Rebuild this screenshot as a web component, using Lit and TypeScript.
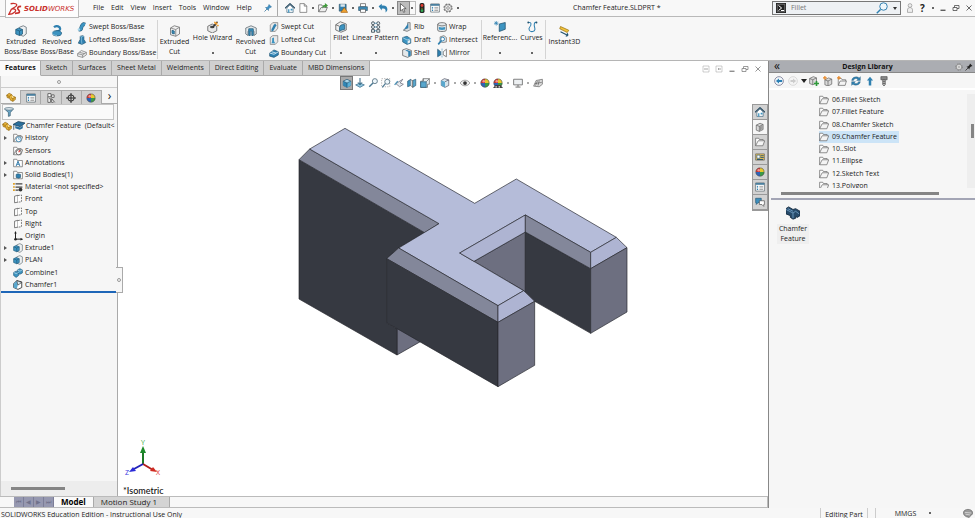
import { LitElement, html, svg, css, nothing } from "lit";
import { customElement, property, state } from "lit/decorators.js";
import { classMap } from "lit/directives/class-map.js";

/* Icon artwork on a 16 x 16 grid. */
const folder = svg`<path d="M1 14V2h5l1 2h6v2" fill="#fff" stroke="#555"/><path d="M1 14L5 6h10.500l-3 8z" fill="#f4f4f4" stroke="#555"/>`;
const cube = svg`<path d="M2 5l6-3 6 3v7l-6 3-6-3z" fill="#a9d6ea" stroke="#1f4f6b"/><path d="M2 5l6 3v7l-6-3z" fill="#2f86b5"/><path d="M8 8l6-3v7l-6 3z" fill="#5bb0d6"/><path d="M2 5l6 3 6-3M8 8v7" fill="none" stroke="#1f4f6b"/>`;
const ball = svg`<circle cx="8" cy="8" r="7" fill="#fff"/><path d="M8 8V1a7 7 0 0 1 7 7z" fill="#e8c82c"/><path d="M8 8V1a7 7 0 0 0-7 7z" fill="#d8342e"/><path d="M8 8h7a7 7 0 0 1-7 7z" fill="#3a9a48"/><path d="M8 8v7a7 7 0 0 1-7-7z" fill="#2d63b8"/><circle cx="8" cy="8" r="6.500" fill="none" stroke="#555"/><circle cx="6" cy="5" r="2" fill="#fff" opacity=".5"/>`;
const gear = svg`<circle cx="8" cy="8" r="6.300" fill="none" stroke="#777" stroke-width="2" stroke-dasharray="3 1.950"/><circle cx="8" cy="8" r="5.300" fill="#f2f2f2" stroke="#666"/><circle cx="8" cy="8" r="2.200" fill="none" stroke="#666"/>`;
const listIcon = svg`<path d="M1 1.500h14v13H1z" fill="#fff" stroke="#4b5961"/><path d="M1 1.500h14v3H1z" fill="#4a7f9e"/><path d="M3 7h2M3 9.500h2M3 12h2" stroke="#2f80b0" stroke-width="1.600"/><path d="M7 7h6M7 9.500h6M7 12h6" stroke="#777"/>`;
const partIcon = svg`<path d="M1 5l4-3 4 2 2 3 4 1v4l-4 3-4-2-1-3-4-1z" fill="#e9b53a" stroke="#8d6410"/><path d="M1 5l4 2 4-3M5 7v3M8 9l4 2 3-3M11 11v4" fill="none" stroke="#8d6410"/><circle cx="10.500" cy="8" r="1.300" fill="#fff3c4"/>`;
const extr = svg`<path d="M6 3l5-2 4 2v9l-4 3-5-2z" fill="#eceff1" stroke="#5a666e"/><path d="M1 6l4-2 5 2v6l-4 2-5-2z" fill="#3d94c1" stroke="#1f5878"/><path d="M1 6l5 2 4-2M6 8v6" fill="none" stroke="#1f5878"/>`;
const cut = svg`<path d="M2 4l5-3 7 2v9l-5 3-7-2z" fill="#f1f1f1" stroke="#666"/><path d="M2 4l7 2 5-3M9 6v9" fill="none" stroke="#777"/><path d="M4 7l3 1v4l-3-1z" fill="#3d94c1" stroke="#1f5878"/>`;
const planeIcon = svg`<path d="M2.500 3.500L8 2v11l-5.500 1z" fill="#fff" stroke="#555" stroke-width="1.200"/><path d="M8 2.500l5.500-1v11L8 13" fill="#fff" stroke="#555" stroke-width="1.200" stroke-dasharray="3 1.500"/>`;
const home = svg`<path d="M3 8v7h10V8L8 3z" fill="#fff" stroke="#2c5570"/><path d="M0 8.500L8 1l8 7.500" fill="none" stroke="#23475e" stroke-width="1.800"/><path d="M5 10h2v5H5zM9 9h3v3H9z" fill="#3d94c1"/>`;
const loft = svg`<path d="M5 2l4-1 2 1v5l3 5-6 3-6-2 3-6z" fill="#2f80b0" stroke="#22526e"/><path d="M5 2l2 1 4-1M7 3v5l1 7" fill="none" stroke="#9fd0e8"/>`;
const sheet = svg`<path d="M1 9l6-5 8 3v4l-6 4-8-2z" fill="#eee" stroke="#666"/><path d="M1 9l8 2 6-4M9 11v4M4 7l8 2" fill="none" stroke="#666"/>`;
const win = svg`<path d="M2 2h12v12H2z" fill="none" stroke="#777"/>`;

const icons: Record<string, unknown> = {
  folder, cube, ball, gear, list: listIcon, part: partIcon, extr, cut, plane: planeIcon, home, loft, sheet,
  ds: svg`<path d="M3 2c4-1 9 0 6 3-1 1-3 2-5 3M4 8c5-1 6 2 3 4-2 2-4 2-6 2l3-6" fill="none" stroke="#c9302c" stroke-width="1.500"/><path d="M15 5c-4 0-5 2-3 4s2 4-4 4" fill="none" stroke="#c9302c" stroke-width="1.800"/>`,
  pin: svg`<path d="M10 1l5 5-3 1-3 3v3L3 7h3l3-3z" fill="#3d8fc4" stroke="#276a96"/><path d="M6 10l-5 5" stroke="#276a96" stroke-width="1.500"/>`,
  pinDark: svg`<path d="M10 1l5 5-3 1-3 3v3L3 7h3l3-3z" fill="#222"/><path d="M6 10l-5 5" stroke="#222" stroke-width="1.500"/>`,
  doc: svg`<path d="M3 1h7l4 4v10H3z" fill="#fff" stroke="#555"/><path d="M10 1v4h4" fill="none" stroke="#555"/>`,
  open: svg`<path d="M1 14V3h5l1 2h6v3" fill="#fff" stroke="#444"/><path d="M1 14l4-7h10l-3 7z" fill="#eee" stroke="#444"/><path d="M7 9c0-5 2-6 4-6V0l5 4-5 4V6c-2 0-3 1-4 3z" fill="#3f9b3a"/>`,
  save: svg`<path d="M2 2h11v11H2z" fill="#2f80b0" stroke="#2b4d62"/><path d="M4 2h7v4H4z" fill="#d9e6ee"/><path d="M10 7l5.500 8h-11z" fill="#f0a331" stroke="#9d5d10"/>`,
  print: svg`<path d="M4 1h8v5H4z" fill="#fff" stroke="#444"/><path d="M1 6h14v6H1z" fill="#3d8fbd" stroke="#2b4d62"/><path d="M4 10h8v5H4z" fill="#fff" stroke="#444"/>`,
  undo: svg`<path d="M1 5l5-4v3c6-1 9 2 9 6 0 2-1 4-3 5 1-5-1-7-6-6v3z" fill="#2f80b0"/>`,
  cursor: svg`<path d="M4 1v12l3-3 2 5 2-1-2-5h4z" fill="#fff" stroke="#333"/>`,
  traffic: svg`<rect x="4" y="0" width="8" height="16" rx="3" fill="#222"/><circle cx="8" cy="4" r="2.300" fill="#e03c31"/><circle cx="8" cy="8.500" r="1.500" fill="#665c22"/><circle cx="8" cy="12.300" r="2.200" fill="#34a853"/>`,
  prompt: svg`<rect width="16" height="16" fill="#222"/><path d="M2 2h12v12H2z" fill="none" stroke="#999"/><path d="M4 4l5 4-5 4M8 12h5" stroke="#fff" stroke-width="1.600" fill="none"/>`,
  search: svg`<circle cx="10" cy="6" r="5" fill="#eef7fc" stroke="#2f80b0" stroke-width="1.300"/><path d="M6 10l-5 5" stroke="#2f80b0" stroke-width="2"/>`,
  user: svg`<circle cx="8" cy="4" r="3" fill="#eee" stroke="#888"/><path d="M4 15V11c0-5 8-5 8 0v4z" fill="#eee" stroke="#888"/>`,
  min: svg`<path d="M3 12.500h10" stroke="#444" stroke-width="2.400"/>`,
  restore: svg`<path d="M2 7h8v6H2zM5 7V3h9v6h-4" fill="none" stroke="#444" stroke-width="1.500"/>`,
  close: svg`<path d="M3 3l10 10M13 3L3 13" stroke="#444" stroke-width="1.600"/>`,
  dockL: svg`${win}<path d="M6 6v4M11 6L9 8l2 2" fill="none" stroke="#555" stroke-width="1.500"/>`,
  dockR: svg`${win}<path d="M10 6v4M6 6l2 2-2 2" fill="none" stroke="#555" stroke-width="1.500"/>`,
  revolve: svg`<path d="M4 3c3-3 9-1 8 3-1 3-5 2-6 4" fill="none" stroke="#2f80b0" stroke-width="3"/><ellipse cx="8" cy="11" rx="6" ry="3.500" fill="#3d94c1" stroke="#1f5878"/><path d="M3 8c-3 3 0 6 5 6" fill="none" stroke="#9fd0e8"/>`,
  sweep: svg`<path d="M3 12c5 1 3-3 5-6s2-3 5-2" fill="none" stroke="#22526e" stroke-width="6"/><path d="M3 12c5 1 3-3 5-6s2-3 5-2" fill="none" stroke="#3d94c1" stroke-width="4.500"/><circle cx="3" cy="12" r="2" fill="#a9d6ea"/>`,
  hole: svg`<path d="M1 7l6-3 6 3v6l-6 3-6-3z" fill="#e8e8e8" stroke="#555"/><ellipse cx="7" cy="8" rx="3" ry="1.800" fill="#444"/><path d="M8 8l6-7" stroke="#333" stroke-width="2"/><path d="M10 1l1 2 2 0-1 2" fill="none" stroke="#f09a28" stroke-width="1.800"/><path d="M14 5l1 2" stroke="#f09a28" stroke-width="2"/>`,
  revcut: svg`<path d="M1 4l7-3 7 3v8l-3 2V9c0-3-8-3-8 0v5l-3-2z" fill="#e4e8ea" stroke="#5a666e"/><path d="M5 5h6v9H9V8H7v6H5z" fill="#3d94c1" stroke="#1f5878"/>`,
  sweepcut: svg`<path d="M2 5l4-4h8v9l-4 5H2z" fill="#e8e8e8" stroke="#666"/><path d="M4 13c4 0 2-5 7-9" fill="none" stroke="#2f80b0" stroke-width="4"/>`,
  loftcut: svg`<path d="M2 4l4-3h8v10l-4 4H2z" fill="#e8e8e8" stroke="#666"/><path d="M5 5l3-1v6l2 3H4l1-3z" fill="#3d94c1"/>`,
  boundcut: svg`<path d="M1 8l7-5 7 3v5l-7 4-7-2z" fill="#2f80b0" stroke="#22526e"/><path d="M1 8l7 2 7-4M4 6l7 2" fill="none" stroke="#d6ecf6" stroke-width="1.400"/>`,
  fillet: svg`<path d="M1 5l6-4 8 3v8l-7 3-7-3z" fill="#eee" stroke="#555"/><path d="M6 13V9c0-3 3-5 7-4v6z" fill="#3d94c1" stroke="#1f5878"/><path d="M1 5l5 2" stroke="#555"/>`,
  pattern: svg`<g fill="#e8eef1" stroke="#46545c" stroke-width="1.200"><circle cx="4" cy="3" r="2"/><circle cx="11" cy="3" r="2"/><circle cx="4" cy="8" r="2"/><circle cx="11" cy="8" r="2"/><path d="M2 11.500h4v3.500H2zM9 11.500h4v3.500H9z"/></g><path d="M6 3h3M6 8h3M6 13h3" stroke="#2f80b0"/>`,
  rib: svg`<path d="M2 13l7-4V1h4v9l1 2-6 3z" fill="#d7dde0" stroke="#555"/><path d="M3 12l7-10v8z" fill="#2f80b0"/>`,
  draft: svg`<path d="M1 4l7-2 6 4v7l-6 2-7-4z" fill="#3d94c1" stroke="#22526e"/><path d="M1 4l7 4 6-2" fill="none" stroke="#d6ecf6"/><path d="M9 9l4-1v4l-4 2z" fill="#e8eef1"/>`,
  shell: svg`<path d="M1 3l6-2 8 3v8l-6 3-8-3z" fill="#e4e8ea" stroke="#444"/><path d="M5 4l5 2v8l4-2V5l-6-2z" fill="#2f80b0"/>`,
  wrap: svg`<path d="M1 4c0-4 14-4 14 0v9c0 3-14 3-14 0z" fill="#e4e8ea" stroke="#444"/><path d="M1 4c3 3 11 3 14 0" fill="none" stroke="#444"/><path d="M3 8c3 1 7 1 10 0v4c-3 1-7 1-10 0z" fill="#3d94c1"/>`,
  intersect: svg`<path d="M5 3l6-2 4 3v7l-5 1-5-1z" fill="#e4e8ea" stroke="#555"/><circle cx="9" cy="6.500" r="3" fill="#fff" stroke="#2f80b0" stroke-width="1.500"/><path d="M7 9l-5 6" stroke="#2f80b0" stroke-width="2.500"/>`,
  mirror: svg`<path d="M1 2l5 4v5l-5 3z" fill="#2f80b0" stroke="#22526e"/><path d="M15 2l-5 4v5l5 3z" fill="#fff" stroke="#444"/><path d="M8 1v14" stroke="#2f80b0" stroke-dasharray="2 1"/>`,
  ref: svg`<path d="M7 4l8-2v9l-8 3z" fill="#3d94c1" stroke="#22526e"/><path d="M3 0v6M0 3h6M1 1l4 4M5 1L1 5" stroke="#2f80b0"/>`,
  curves: svg`<path d="M3 2c5-1 4 4 2 6s-1 7 4 6 2-6 2-8 0-5 3-4" fill="none" stroke="#2f80b0" stroke-width="1.400"/><circle cx="3" cy="2" r="1.200" fill="#22526e"/><circle cx="14" cy="2" r="1.200" fill="#22526e"/>`,
  instant: svg`<path d="M2 2l11 5-2 3L1 5z" fill="#f2c33c" stroke="#9c7412"/><path d="M2 9l10 5M12 14l-1-3M12 14l-3 1" fill="none" stroke="#22526e" stroke-width="1.500"/>`,
  config: svg`<path d="M3 1h5v5H3zM3 6v9h4V9H5" fill="#fff" stroke="#444" stroke-width="1.200"/><path d="M9 3h4v4H9zM9 9l5 6M9 9v6h3" fill="#fff" stroke="#444" stroke-width="1.200"/>`,
  target: svg`<circle cx="8" cy="8" r="5" fill="none" stroke="#222" stroke-width="1.500"/><path d="M8 0v16M0 8h16" stroke="#222" stroke-width="1.500"/>`,
  funnel: svg`<path d="M1 3h14l-5 6v5l-3 1V9z" fill="#6da9c9" stroke="#2b4d62"/><ellipse cx="8" cy="3" rx="7" ry="2" fill="#e8f2f7" stroke="#2b4d62"/>`,
  cap: svg`<path d="M0 6l7-4 9 2-6 5z" fill="#2a6f9c" stroke="#173f5a"/><path d="M3 8l7 2 3-3v4l-4 2-6-2z" fill="#2a6f9c"/><path d="M1 7v6" stroke="#173f5a"/>`,
  history: svg`${folder}<circle cx="9" cy="10" r="4" fill="#fff" stroke="#2f80b0" stroke-width="1.300"/><path d="M9 7v3h2" fill="none" stroke="#2f80b0"/>`,
  sensors: svg`${folder}<circle cx="9" cy="10" r="4" fill="#fff" stroke="#555" stroke-width="1.300"/><path d="M9 10l2-3" stroke="#d8342e" stroke-width="1.800"/>`,
  annot: svg`<path d="M1 14V2h5l1 2h8v10z" fill="#fff" stroke="#555"/><path d="M5 13l3-8 3 8M6 10h4" fill="none" stroke="#2471a3" stroke-width="1.400"/>`,
  bodies: svg`<path d="M1 14V2h5l1 2h8v10z" fill="#fff" stroke="#555"/><path d="M5 7l3-1 4 1v5l-3 1-4-1z" fill="#2f80b0" stroke="#22526e"/>`,
  material: svg`<path d="M4 3h11M4 8h11" stroke="#444" stroke-width="2"/><path d="M4 13h5" stroke="#444" stroke-width="2"/><path d="M0 3h3M0 8h3M0 13h3" stroke="#e0a32c" stroke-width="2.500"/><circle cx="12" cy="12" r="3" fill="#333"/>`,
  origin: svg`<path d="M4 2v11h11" fill="none" stroke="#222" stroke-width="1.600"/><path d="M4 0l2 4H2zM16 13l-4-2v4z" fill="#222"/><circle cx="4" cy="13" r="2" fill="#222"/>`,
  combine: svg`<path d="M1 7l4-2 4 2v5l-4 3-4-3z" fill="#3d94c1" stroke="#1f5878"/><path d="M7 3l4-2 4 2v5l-4 2-4-2z" fill="#3d94c1" stroke="#1f5878"/><path d="M1 7l4 2 4-2M7 3l4 2 4-2" fill="none" stroke="#d6ecf6"/>`,
  chamfer: svg`<path d="M1 6l5-5 8 2v9l-6 3-7-3z" fill="#fff" stroke="#333" stroke-width="1.400"/><path d="M1 6l5-5 2 6-2 7-5-2z" fill="#5aa8ce"/><path d="M6 1l8 3-6 4z" fill="#dcecf4" stroke="#333"/>`,
  normal: svg`<path d="M1 11l7-3 7 3-7 4z" fill="#8fc4de" stroke="#2b5f7d"/><path d="M8 0v9M5 7l3 4 3-4" fill="none" stroke="#2b5f7d" stroke-width="1.500"/>`,
  zoom: svg`<circle cx="11" cy="5" r="4" fill="#eef7fc" stroke="#4d6a7a" stroke-width="1.300"/><path d="M8 8l-6 6" stroke="#4d7a94" stroke-width="2.400"/>`,
  zoomArea: svg`<path d="M1 1h13v13H1z" fill="none" stroke="#888" stroke-dasharray="2 2"/><circle cx="10" cy="6" r="4" fill="#eef7fc" stroke="#4d6a7a" stroke-width="1.300"/><path d="M7 9l-5 6" stroke="#4d7a94" stroke-width="2"/>`,
  prev: svg`<path d="M14 2L3 9l6 5 6-4-5-2z" fill="#e4eaee" stroke="#556"/><path d="M1 11l5-6" stroke="#4d94b8" stroke-width="2"/>`,
  section: svg`<path d="M1 5l5-3v10l-5 2z" fill="#3d94c1" stroke="#22526e"/><path d="M9 4l5-2v10l-5 3z" fill="#5aa8ce" stroke="#22526e"/><path d="M6 3l3 1v11l-3-3" fill="#ddd" stroke="#555"/>`,
  orient: svg`<path d="M5 1h10v9h-3v5H1V5h4z" fill="#e8eef1" stroke="#555"/><path d="M1 6h9v9H1z" fill="#5aa8ce" stroke="#22526e"/><path d="M5 1v4M10 6l5-5" stroke="#555"/>`,
  style: svg`<path d="M2 4l5-3 7 2v9l-6 3-6-3z" fill="#d7e5ec" stroke="#445"/><path d="M2 4l6 2v9l-6-3z" fill="#5aa8ce"/><path d="M8 6l6-3" stroke="#445"/>`,
  eye: svg`<path d="M0 8c4-6 12-6 16 0-4 6-12 6-16 0z" fill="#eee" stroke="#777"/><circle cx="8" cy="8" r="3" fill="#333"/>`,
  scene: svg`${ball}<path d="M0 16l4-5h8l4 5z" fill="#444"/><path d="M4 14h2M9 14h2" stroke="#fff" stroke-width="2"/>`,
  screen: svg`<path d="M1 2h14v9H1z" fill="#eef1f3" stroke="#666" stroke-width="1.300"/><path d="M8 11v3M4 14.500h8" stroke="#666" stroke-width="1.500"/>`,
  render: svg`<path d="M1 13l4-9 10-2v8l-5 4z" fill="#ddd" stroke="#555"/><path d="M4 12l3-7M8 12l2-8M3 9l11-2" stroke="#555" fill="none"/>`,
  lib: svg`<path d="M2 5l6-3 5 2v8l-6 3-5-2z" fill="#d9d9d9" stroke="#555"/><path d="M2 5l5 2 6-3M7 7v8M9 7v6M11 6v6" fill="none" stroke="#555"/>`,
  palette: svg`<path d="M1 3h14v10H1z" fill="#f1c75a" stroke="#555"/><path d="M3 5h5v5H3z" fill="#fff" stroke="#22526e"/><path d="M9 6h5M9 9h5M3 12h10" stroke="#22526e" stroke-width="1.500"/>`,
  chat: svg`<path d="M1 2h9v7H5l-3 3V9H1z" fill="#3d8fbd" stroke="#22526e"/><path d="M7 6h8v6h-1v3l-3-3H7z" fill="#fff" stroke="#444"/>`,
  back: svg`<circle cx="8" cy="8" r="7" fill="#eef5f9" stroke="#557"/><path d="M3 8l5-4v2.500h5v3H8V12z" fill="#2a7fb5"/>`,
  fwd: svg`<circle cx="8" cy="8" r="7" fill="#f4f4f4" stroke="#ccc"/><path d="M13 8L8 4v2.500H4v3h4V12z" fill="#ccc"/>`,
  libAdd: svg`<path d="M1 4l6-3 5 2v8l-6 3-5-2z" fill="#d9d9d9" stroke="#555"/><path d="M1 4l5 2 6-3M6 6v8" fill="none" stroke="#555"/><path d="M12 8v8M8 12h8" stroke="#2f9a3a" stroke-width="2.600"/>`,
  libNew: svg`<path d="M3 6l6-3 5 2v8l-6 3-5-2z" fill="#d9d9d9" stroke="#555"/><path d="M3 6l5 2 6-3M8 8v8" fill="none" stroke="#555"/><path d="M3 0v6M0 3h6" stroke="#e8892a" stroke-width="2"/>`,
  foldNew: svg`<path d="M2 15V4h5l1 2h6v2" fill="#fff" stroke="#555"/><path d="M2 15l3-7h10l-2 7z" fill="#f4f4f4" stroke="#555"/><path d="M3 0v6M0 3h6" stroke="#e8892a" stroke-width="2"/>`,
  refresh: svg`<path d="M1 7c1-6 9-7 12-4l2-2v6H9l2-2C8 3 5 4 4 7zM15 9c-1 6-9 7-12 4l-2 2V9h6l-2 2c3 2 6 1 7-2z" fill="#2f80b0" stroke="#22526e" stroke-width=".5"/>`,
  up: svg`<path d="M8 1l5 6h-3v8H6V7H3z" fill="#2f80b0"/>`,
  bolt: svg`<path d="M3 1h10v5H3z" fill="#888" stroke="#444"/><path d="M6 6h4v8l-2 2-2-2z" fill="#bbb" stroke="#444"/><path d="M6 9h4M6 12h4" stroke="#444"/>`,
  feature: svg`<path d="M0 3l3-2 5 3 3-1 5 3v5l-3 2-2-1v2l-3 1-3-2v-2L0 9z" fill="#274b6b" stroke="#132a40"/><path d="M0 4l8 4 3-2 4 3M8 8v6M2 3l6 3" fill="none" stroke="#6f9cc0"/>`,
  tag: svg`<path d="M1 6c2-5 12-5 14 0s-4 6-5 9C3 14 0 11 1 6z" fill="#9a9a9a" stroke="#555"/><path d="M3 7l10 1M4 10l7 1" stroke="#eee"/>`,
};

const ic = (name: string, size = "s10") =>
  html`<svg class="ic ${size}" viewBox="0 0 16 16" aria-hidden="true">${icons[name]}</svg>`;

const shared = css`
  * { box-sizing: border-box; }
  button, input { font: inherit; color: inherit; margin: 0; padding: 0; border: 0; background: none; }
  button { display: inline-flex; align-items: center; justify-content: center; white-space: nowrap; }
  .ic { display: block; flex: none; width: 10px; height: 10px; }
  .s8 { width: 8px; height: 8px; }
  .s12 { width: 12px; height: 12px; }
  .s14 { width: 14px; height: 14px; }
  .dot { flex: none; width: 2px; height: 2px; background: #666; }
`;

@customElement("title-bar")
class TitleBar extends LitElement {
  static styles = [shared, css`
    :host { display: flex; align-items: center; height: 17px; border-bottom: 1px solid #b9b9b9; background: #f8f8f8; }
    .logo { align-self: flex-start; display: flex; align-items: center; gap: 2px; height: 18px; margin-left: 5px; width: 74px; padding: 0 0 0 2px;
      flex: none; background: #fdfdfd; border: 1px solid #bbb; border-top: 0; z-index: 1; font: italic 7px/12px "DejaVu Sans", sans-serif; color: #c9302c; }
    .logo b { font-weight: 700; }
    nav { display: flex; gap: 7px; margin-left: 14px; }
    .pin { margin: 0 5px 0 12px; }
    .tools { display: flex; align-items: center; height: 16px; border-left: 1px solid #aaa; padding-left: 6px; }
    .tools button { width: 13px; height: 14px; }
    .tools .drop { width: 7px; }
    .tools .on { background: #bdbdbd; border: 1px solid #888; }
    .tools .onDrop { border: 1px solid #bbb; border-left: 0; width: 6px; }
    h1 { flex: 1; margin: 0; font: inherit; text-align: center; white-space: nowrap; }
    .find { display: flex; align-items: center; gap: 5px; width: 129px; height: 14px; padding: 0 3px; border: 1px solid #777; background: #eef1f4; }
    .find input { flex: 1; min-width: 0; outline: 0; }
    .find input::placeholder { color: #777; opacity: 1; }
    .caret { border: 2px solid transparent; border-top: 3px solid #333; border-bottom: 0; }
    .right { display: flex; align-items: center; margin-left: 2px; }
    .right button { width: 13px; height: 12px; }
    .right .drop { width: 7px; }
    .right .q { font-weight: 700; font-size: 10px; }
  `];
  render() {
    const menus = ["File", "Edit", "View", "Insert", "Tools", "Window", "Help"];
    const tools = ["home", "doc", ".", "open", ".", "save", ".", "print", ".", "undo", "."];
    const drop = html`<button class="drop" aria-label="More"><i class="dot"></i></button>`;
    return html`
      <div class="logo">${ic("ds", "s14")}<span><b>SOLID</b>WORKS</span></div>
      <nav>${menus.map((m) => html`<button>${m}</button>`)}</nav>
      <button class="pin" aria-label="Pin menu">${ic("pin", "s8")}</button>
      <div class="tools">
        ${tools.map((t) => t === "." ? drop : html`<button aria-label=${t}>${ic(t)}</button>`)}
        <button class="on" aria-label="Select">${ic("cursor")}</button>
        <button class="onDrop" aria-label="Select options"><i class="dot"></i></button>
        <button aria-label="Rebuild">${ic("traffic")}</button>
        <button aria-label="Properties">${ic("list")}</button>
        <button aria-label="Options">${ic("gear")}</button>${drop}
      </div>
      <h1>Chamfer Feature.SLDPRT *</h1>
      <label class="find">${ic("prompt")}<input aria-label="Search commands" placeholder="Fillet" />${ic("search", "s12")}<i class="caret"></i></label>
      <div class="right">
        <button aria-label="Account">${ic("user")}</button>
        <button class="q" aria-label="Help">?</button>${drop}
        <button aria-label="Minimize">${ic("min", "s8")}</button>
        <button aria-label="Restore">${ic("restore", "s8")}</button>
        <button aria-label="Close">${ic("close", "s8")}</button>
      </div>`;
  }
}

type Cell =
  | { kind: "big"; icon: string; lines: string[]; menu?: boolean; end?: boolean }
  | { kind: "stack"; items: [string, string][]; end?: boolean };

@customElement("command-ribbon")
class CommandRibbon extends LitElement {
  static styles = [shared, css`
    :host { display: grid; grid-template-columns: 36px 36px 83px 33px 43px 33px 64px 20px 49px 35px 47px 36px 28px 37px;
      height: 43px; padding: 3px 0 1px 3px; background: #f7f7f7; }
    .big { flex-direction: column; justify-content: flex-start; padding-top: 5px; line-height: 10px; }
    .menu { padding-top: 1px; }
    .menu .dot { margin-top: 9px; }
    .stack { display: grid; grid-template-rows: repeat(3, 13px); padding-left: 2px; }
    .stack button { justify-content: flex-start; gap: 2px; }
    .end { border-right: 1px solid #d4d4d4; }
  `];
  cells: Cell[] = [
    { kind: "big", icon: "extr", lines: ["Extruded", "Boss/Base"] },
    { kind: "big", icon: "revolve", lines: ["Revolved", "Boss/Base"] },
    { kind: "stack", end: true, items: [["sweep", "Swept Boss/Base"], ["loft", "Lofted Boss/Base"], ["sheet", "Boundary Boss/Base"]] },
    { kind: "big", icon: "cut", lines: ["Extruded", "Cut"] },
    { kind: "big", icon: "hole", lines: ["Hole Wizard"], menu: true },
    { kind: "big", icon: "revcut", lines: ["Revolved", "Cut"] },
    { kind: "stack", end: true, items: [["sweepcut", "Swept Cut"], ["loftcut", "Lofted Cut"], ["boundcut", "Boundary Cut"]] },
    { kind: "big", icon: "fillet", lines: ["Fillet"], menu: true },
    { kind: "big", icon: "pattern", lines: ["Linear Pattern"], menu: true },
    { kind: "stack", items: [["rib", "Rib"], ["draft", "Draft"], ["shell", "Shell"]] },
    { kind: "stack", end: true, items: [["wrap", "Wrap"], ["intersect", "Intersect"], ["mirror", "Mirror"]] },
    { kind: "big", icon: "ref", lines: ["Referenc..."], menu: true },
    { kind: "big", icon: "curves", lines: ["Curves"], menu: true, end: true },
    { kind: "big", icon: "instant", lines: ["Instant3D"] },
  ];
  render() {
    return this.cells.map((c) => c.kind === "big"
      ? html`<button class=${classMap({ big: true, menu: !!c.menu, end: !!c.end })}>
          ${ic(c.icon, "s12")}${c.lines.map((l) => html`<span>${l}</span>`)}
          ${c.menu ? html`<i class="dot"></i>` : nothing}</button>`
      : html`<div class=${classMap({ stack: true, end: !!c.end })}>
          ${c.items.map(([i, t]) => html`<button>${ic(i)}${t}</button>`)}</div>`);
  }
}

@customElement("feature-tree")
class FeatureTree extends LitElement {
  static styles = [shared, css`
    :host { display: flex; flex-direction: column; position: relative; z-index: 2; width: 118px; flex: none; background: #f6f6f6; border-right: 1px solid #aaa; border-left: 1px solid #ccc; }
    .grip { display: grid; place-items: center; height: 12px; border-bottom: 1px solid #ccc; }
    .ring { width: 4px; height: 4px; border: 1px solid #999; border-radius: 50%; }
    .tabs { display: grid; grid-template-columns: repeat(5, 1fr) 15px; height: 14px; margin-top: 2px; border-bottom: 1px solid #aaa; }
    .tabs button { background: #d0d0d0; border: 1px solid #aaa; border-left: 0; border-bottom: 0; }
    .tabs .on, .tabs .more { background: none; border: 0; }
    .tabs .on { border-right: 1px solid #aaa; }
    .tabs .more { font-size: 12px; line-height: 12px; padding-bottom: 2px; }
    .filter { display: flex; align-items: center; height: 16px; margin: 0 3px 0 1px; padding: 0 1px; border: 1px solid #c4c4c4; background: #fafafa; }
    .filter input { flex: 1; min-width: 0; outline: 0; }
    ul { display: grid; grid-auto-rows: 1fr; height: 171px; margin: 0; padding: 0; list-style: none; overflow: hidden; }
    li { display: flex; align-items: center; gap: 2px; white-space: pre; }
    .tw { width: 10px; height: 4px; padding-left: 3px; }
    .tw::before { content: ""; display: block; width: 0; border: 2px solid transparent; border-left: 3px solid #555; border-right: 0; }
    .tw.leaf { visibility: hidden; }
    .root { gap: 1px; padding-left: 1px; }
    .bar { height: 2px; background: #1e66b8; }
    .scroll { margin-top: auto; height: 15px; padding: 6px 0 0 10px; background: #ededed; }
    .thumb { width: 54px; height: 3px; background: #858585; }
    .handle { position: absolute; right: -6px; top: 191px; width: 7px; height: 26px; border: 1px solid #aaa; border-left: 0; background: #f6f6f6; }
  `];
  rows: [string, string, boolean][] = [
    ["history", "History", true], ["sensors", "Sensors", false], ["annot", "Annotations", true], ["bodies", "Solid Bodies(1)", true],
    ["material", "Material <not specified>", false], ["plane", "Front", false], ["plane", "Top", false], ["plane", "Right", false],
    ["origin", "Origin", false], ["extr", "Extrude1", true], ["extr", "PLAN", true], ["combine", "Combine1", false], ["chamfer", "Chamfer1", false],
  ];
  render() {
    return html`
      <div class="grip"><i class="ring"></i></div>
      <div class="tabs">
        <button class="on" aria-label="Feature tree">${ic("part")}</button>
        ${["list", "config", "target", "ball"].map((i) => html`<button aria-label=${i}>${ic(i)}</button>`)}
        <button class="more" aria-label="More tabs">›</button>
      </div>
      <label class="filter">${ic("funnel")}<input aria-label="Filter tree" /></label>
      <ul>
        <li class="root">${ic("part")}${ic("cap", "s12")}<span>Chamfer Feature  (Default&lt;</span></li>
        ${this.rows.map(([i, t, kids]) => html`<li><i class=${classMap({ tw: true, leaf: !kids })}></i>${ic(i)}<span>${t}</span></li>`)}
      </ul>
      <div class="bar"></div>
      <div class="scroll"><div class="thumb"></div></div>
      <button class="handle" aria-label="Collapse panel"><i class="ring"></i></button>`;
  }
}

@customElement("model-view")
class ModelView extends LitElement {
  static styles = [shared, css`
    :host { display: block; position: relative; flex: 1; min-width: 0; background: #fff; }
    .scene { display: block; width: 100%; height: 100%; position: absolute; inset: 0; }
    .scene polygon { stroke: #24262c; stroke-width: 2; stroke-linejoin: round; }
    .top { fill: #b5bcd9; } .lit { fill: #aeb4d2; } .mid { fill: #83879a; } .side { fill: #6d6f80; } .dark { fill: #363941; }
    .hud { position: absolute; top: 0; left: 0; right: 0; display: flex; justify-content: center; align-items: center; padding-right: 2px; }
    .hud button { width: 13px; height: 14px; }
    .hud .drop { width: 7px; }
    .hud .on { background: #aaa; border: 1px solid #777; }
    .hud .dot { background: #aaa; }
    .triad { position: absolute; left: 6px; bottom: 18px; width: 38px; height: 40px; }
    .triad text { font: 7px "Open Sans", sans-serif; }
    .view { position: absolute; left: 5px; bottom: 0; font: 500 9px/10px Lato, sans-serif; color: #111; }
    .task { position: absolute; right: 0; top: 28px; width: 16px; display: grid; grid-auto-rows: 15px; border: 1px solid #999; }
    .task button { background: #d2d2d2; border-bottom: 1px solid #999; }
    .task .on { background: #f6f6f6; }
  `];
  faces: [string, string][] = [
    ["side", "318,620 388,677 318,717"],
    ["dark", "24,131 401,350 323,396 287,428 287,620 318,638 318,717 24,549"],
    ["mid", "56,99 444,323 401,350 24,131"],
    ["side", "549,436 703,348 703,528 698,524"],
    ["dark", "703,348 899,458 899,652 731,556 703,528"],
    ["top", "162,37 551,262 676,189 976,364 899,409 703,297 506,411 698,524 621,569 323,396 444,323 56,99"],
    ["mid", "323,396 621,569 621,619 287,428"],
    ["dark", "287,428 621,619 621,812 287,620"],
    ["lit", "621,569 698,524 731,556 621,619"],
    ["side", "621,619 731,556 731,748 621,812"],
    ["lit", "506,411 703,297 703,348 549,436"],
    ["mid", "703,297 899,409 899,458 703,348"],
    ["lit", "899,409 976,364 1008,395 899,458"],
    ["side", "899,458 1008,395 1008,588 899,652"],
  ];
  render() {
    const hud = ["normal", "zoom", "zoomArea", "prev", "section", "orient", ".", "style", ".", "eye", ".", "ball", "scene", ".", "screen", ".", "render"];
    const task = ["home", "lib", "folder", "palette", "ball", "list", "chat"];
    return html`
      <svg class="scene" viewBox="-516 -120 1944 1260" role="img" aria-label="Chamfered part, isometric view">
        ${this.faces.map(([c, p]) => svg`<polygon class=${c} points=${p}></polygon>`)}
      </svg>
      <div class="hud">
        <button class="on" aria-label="View orientation">${ic("cube")}</button>
        ${hud.map((h) => h === "." ? html`<button class="drop" aria-label="More"><i class="dot"></i></button>` : html`<button aria-label=${h}>${ic(h)}</button>`)}
      </div>
      <div class="task">${task.map((t) => html`<button class=${t === "lib" ? "on" : ""} aria-label=${t}>${ic(t)}</button>`)}</div>
      <svg class="triad" viewBox="0 0 38 40" aria-hidden="true">
        <path d="M19 26V12" stroke="#1d7a26" stroke-width="2"/><path d="M19 8l3 7h-6z" fill="#1d8a2a"/>
        <path d="M19 26l10 6" stroke="#b3201c" stroke-width="2"/><path d="M33 34l-7-1 3-4z" fill="#d02a22"/>
        <path d="M19 26L10 31" stroke="#2222b8" stroke-width="2"/><path d="M5 34l4-5 3 4z" fill="#2a2ad8"/>
        <text x="17" y="7" fill="#2fa83a">Y</text><text x="32" y="37" fill="#e0302a">X</text><text x="1" y="37" fill="#3a3ae0">Z</text>
      </svg>
      <div class="view">*Isometric</div>`;
  }
}

@customElement("design-library")
class DesignLibrary extends LitElement {
  static styles = [shared, css`
    :host { display: flex; flex-direction: column; width: 207px; flex: none; border-left: 1px solid #888; background: #f6f6f6; }
    header { display: flex; align-items: center; gap: 2px; height: 12px; padding: 0 2px 0 5px; background: #abadb2; border-bottom: 1px solid #888; }
    h2 { flex: 1; margin: 0; font: inherit; font-weight: 700; text-align: center; color: #111; }
    .guillemet { font-size: 12px; line-height: 8px; padding-bottom: 2px; color: #111; }
    .bar { display: flex; align-items: center; height: 17px; padding-left: 3px; border-bottom: 2px solid #fff; }
    .bar button { width: 14px; height: 14px; }
    .bar .drop { width: 7px; }
    .caret { border: 3px solid transparent; border-top: 4px solid #222; border-bottom: 0; }
    .pane { display: flex; height: 98px; padding-top: 4px; }
    ul { display: grid; grid-auto-rows: 1fr; height: 98px; margin: 0; padding: 0 0 0 50px; list-style: none; }
    .clip { flex: 1; overflow: hidden; }
    li { display: flex; }
    li button { gap: 3px; padding-right: 2px; }
    .on { background: #cce4f7; }
    .track { width: 8px; background: #eee; padding: 30px 0 0 4px; }
    .vthumb { width: 3px; height: 14px; background: #858585; }
    .hscroll { height: 10px; padding: 4px 0 0 12px; }
    .hthumb { width: 158px; height: 3px; background: #858585; }
    .split { height: 2px; background: #a3a5b5; margin-left: 2px; }
    figure { display: flex; flex-direction: column; align-items: center; gap: 4px; width: 32px; margin: 6px 0 0 8px; text-align: center; line-height: 10px; }
    figcaption { background: #efefef; padding: 0 1px; }
  `];
  @state() selected = 3;
  folders = ["06.Fillet Sketch", "07.Fillet Feature", "08.Chamfer Sketch", "09.Chamfer Feature", "10..Slot", "11.Ellipse", "12.Sketch Text", "13.Polygon"];
  render() {
    return html`
      <header><button class="guillemet" aria-label="Collapse">«</button><h2>Design Library</h2>
        <button aria-label="Settings">${ic("gear", "s8")}</button><button aria-label="Pin">${ic("pinDark", "s8")}</button></header>
      <div class="bar">
        <button aria-label="Back">${ic("back")}</button><button aria-label="Forward">${ic("fwd")}</button>
        <button class="drop" aria-label="History"><i class="caret"></i></button>
        ${["libAdd", "libNew", "foldNew", "refresh", "up", "bolt"].map((i) => html`<button aria-label=${i}>${ic(i)}</button>`)}
      </div>
      <div class="pane">
        <div class="clip"><ul>${this.folders.map((f, i) => html`<li><button class=${i === this.selected ? "on" : ""} @click=${() => (this.selected = i)}>${ic("folder")}${f}</button></li>`)}</ul></div>
        <div class="track"><div class="vthumb"></div></div>
      </div>
      <div class="hscroll"><div class="hthumb"></div></div>
      <div class="split"></div>
      <figure>${ic("feature", "s14")}<figcaption>Chamfer Feature</figcaption></figure>`;
  }
}

@customElement("app-root")
class AppRoot extends LitElement {
  @property() document = "Chamfer Feature";
  @state() tab = "Features";
  static styles = [shared, css`
    :host { display: flex; flex-direction: column; height: 100vh; min-height: 420px; overflow: hidden; background: #f7f7f7; color: #222; font: 7px/10px "Open Sans", "Noto Sans", sans-serif; }
    title-bar, command-ribbon { flex: none; }
    main { display: flex; flex: 1; min-height: 0; border-top: 1px solid #b5b5b5; }
    .work { display: flex; flex-direction: column; flex: 1; min-width: 0; background: #fff; }
    .tabs { display: flex; height: 15px; flex: none; }
    .tabs button { padding: 0 5px; background: #d0d0d0; border: 1px solid #aaa; border-width: 0 1px 1px 0; }
    .tabs .on { padding: 0 4px 0 5px; font-weight: 700; background: #fafafa; border-bottom-color: #fafafa; color: #111; }
    .mdi { display: flex; margin-left: auto; padding-right: 4px; opacity: .7; }
    .tabs .mdi button { width: 13px; padding: 0; background: none; border: 0; }
    .body { display: flex; flex: 1; min-height: 0; }
    .sheets { display: flex; flex: none; height: 12px; padding-left: 14px; border: 1px solid #bbb; border-left: 0; background: #f7f7f7; font-size: 8px; }
    .nav { display: grid; grid-template-columns: repeat(4, 10px); background: #9698b0; }
    .nav button { border-right: 1px solid #7c7e98; color: #70728c; font-size: 6px; line-height: 8px; }
    .sheets .model { padding: 0 7px; font-weight: 700; color: #000; background: #fafafa; }
    .sheets .study { padding: 0 12px 0 7px; background: #d4d4d4; border: 1px solid #aaa; border-width: 0 1px; }
    .status { display: flex; flex: none; height: 10px; line-height: 13px; padding-left: 1px; overflow: hidden; background: #f7f7f7; }
    .status .edit { margin-left: auto; width: 48px; text-align: center; border: 1px solid #ccc; border-width: 0 1px; }
    .units { display: flex; align-items: center; justify-content: center; gap: 13px; width: 75px; margin-left: 7px; border-left: 1px solid #ccc; }
    .tag { margin-left: 13px; width: 12px; }
  `];
  render() {
    const tabs = ["Features", "Sketch", "Surfaces", "Sheet Metal", "Weldments", "Direct Editing", "Evaluate", "MBD Dimensions"];
    return html`
      <title-bar></title-bar>
      <command-ribbon></command-ribbon>
      <main>
        <div class="work">
          <div class="tabs">
            ${tabs.map((t) => html`<button class=${t === this.tab ? "on" : ""} @click=${() => (this.tab = t)}>${t}</button>`)}
            <div class="mdi">${["dockL", "dockR", "min", "restore", "close"].map((i) => html`<button aria-label=${i}>${ic(i, "s8")}</button>`)}</div>
          </div>
          <div class="body"><feature-tree></feature-tree><model-view></model-view></div>
          <div class="sheets">
            <div class="nav">${["⏮", "◀", "▶", "⏭"].map((a) => html`<button>${a}</button>`)}</div>
            <button class="model">Model</button><button class="study">Motion Study 1</button>
          </div>
        </div>
        <design-library></design-library>
      </main>
      <div class="status"><span>SOLIDWORKS Education Edition - Instructional Use Only</span>
        <span class="edit">Editing Part</span><span class="units">MMGS<i class="dot"></i></span><span class="tag">${ic("tag")}</span></div>`;
  }
}
